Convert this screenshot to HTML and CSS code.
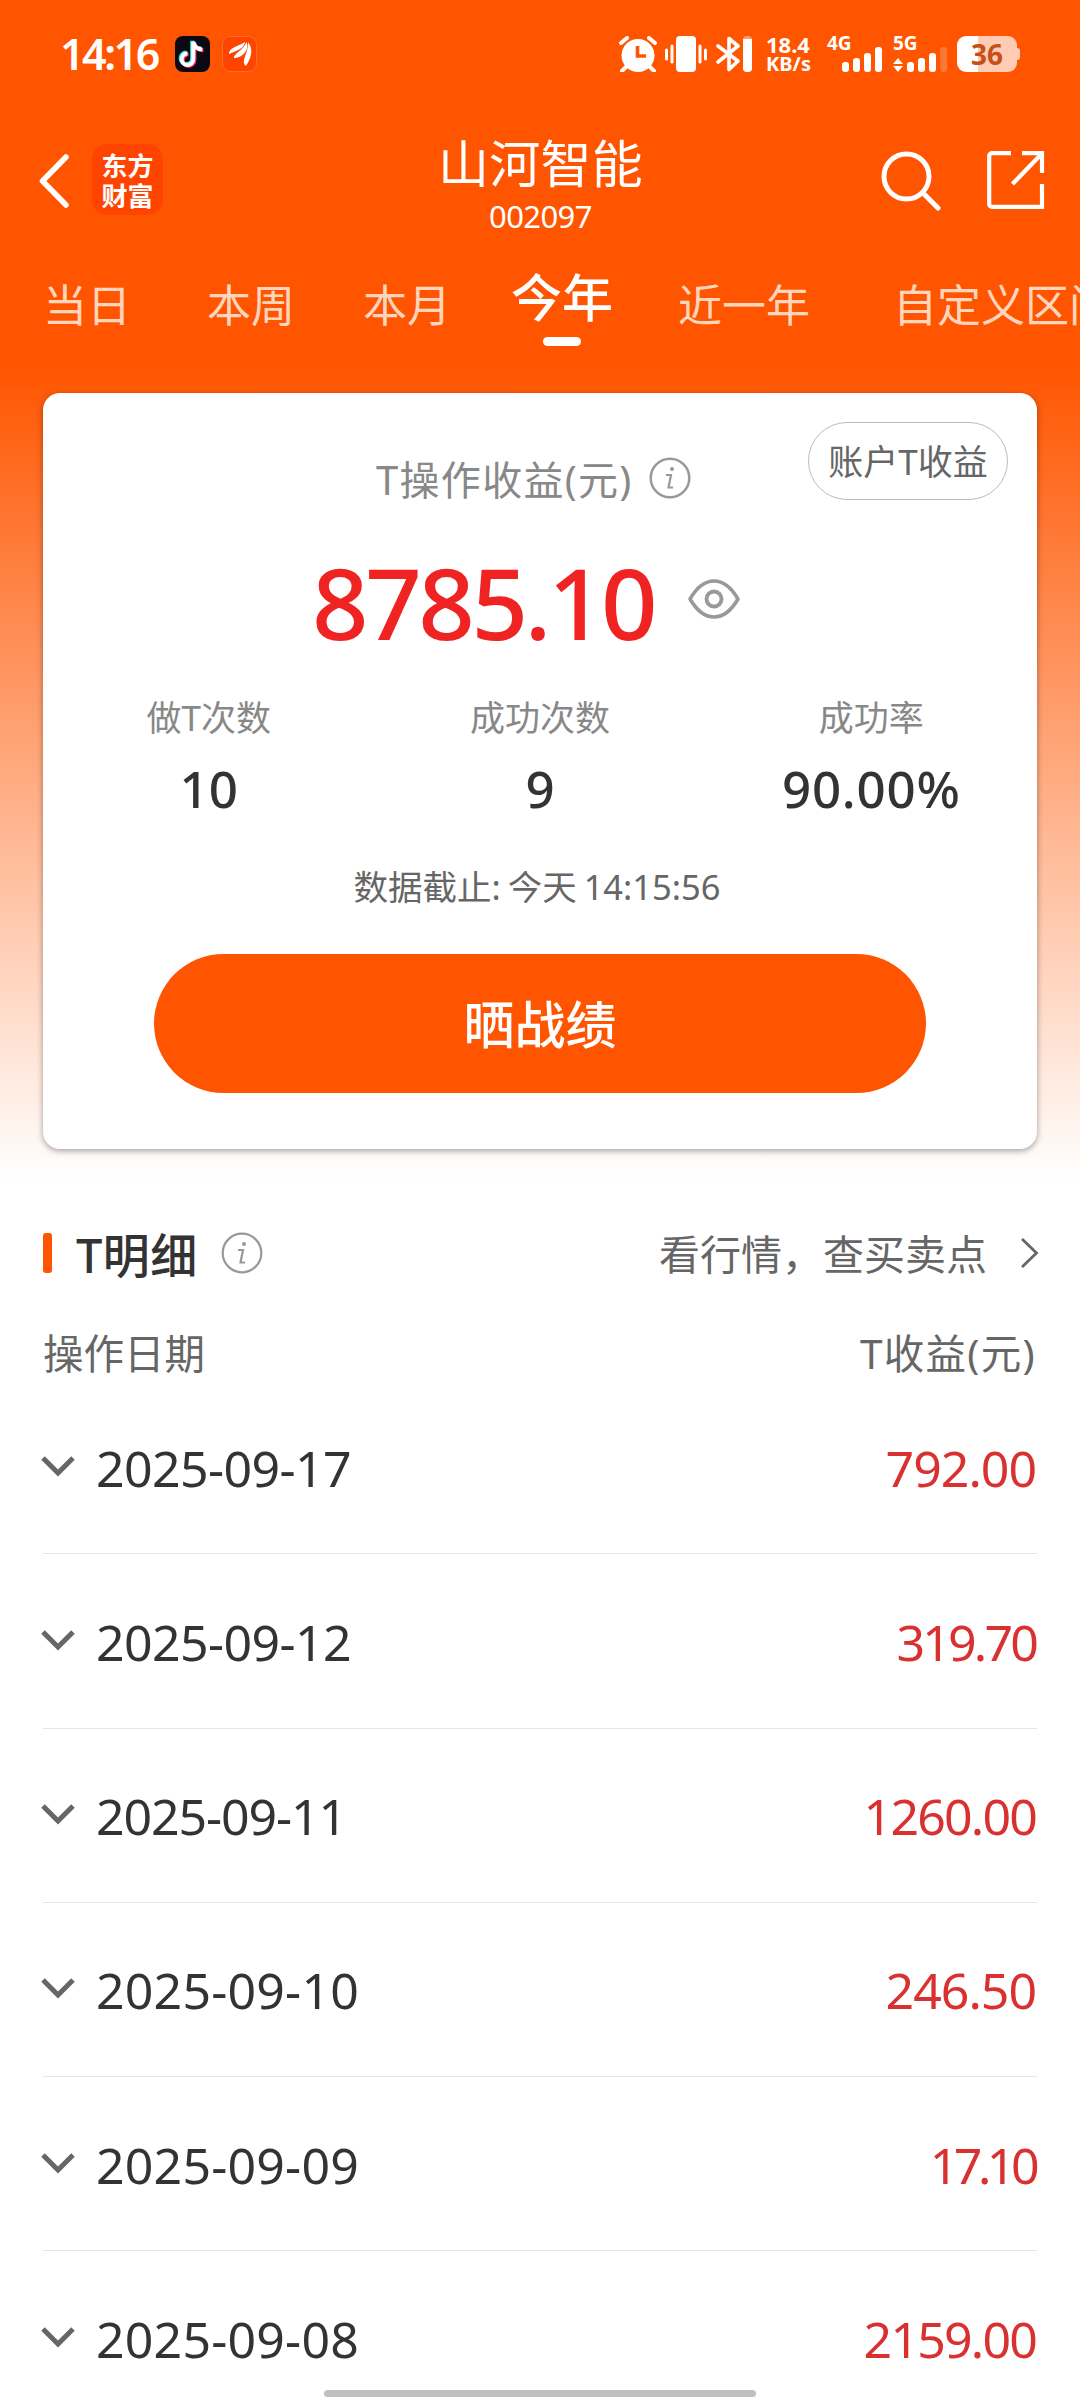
FILE: index.html
```html
<!DOCTYPE html>
<html lang="zh-CN">
<head>
  <meta charset="UTF-8">
  <meta name="viewport" content="width=device-width, initial-scale=1">
  <title>山河智能 002097</title>
  <link rel="stylesheet" href="styles.css">
</head>
<body>
<div class="page">

  <!-- 状态栏 -->
  <div class="status">
    <span class="time">14:16</span>
    <svg class="app-tiktok" width="35" height="36" viewBox="0 0 35 36">
      <rect width="35" height="36" rx="8" fill="#0b0a14"/>
      <g fill="none" stroke-width="4">
        <path d="M18 5v17.500a5.800 5.800 0 1 1-5.800-5.800M18 5c.8 5 4.500 7.500 9 7.700" transform="translate(-.8 -.2)" stroke="#2af0ea"/>
        <path d="M18 5v17.500a5.800 5.800 0 1 1-5.800-5.800M18 5c.8 5 4.500 7.500 9 7.700" transform="translate(1.400 1.600)" stroke="#f5305a"/>
        <path d="M18 5v17.500a5.800 5.800 0 1 1-5.800-5.800M18 5c.8 5 4.500 7.500 9 7.700" transform="translate(.3 .7)" stroke="#fff"/>
      </g>
    </svg>
    <svg class="app-em" width="35" height="36" viewBox="0 0 35 36">
      <rect x=".5" y=".5" width="34" height="35" rx="8" fill="#ff4400" stroke="#ff6c2c"/>
      <path d="M7 18C6 12 17 10 23 6 23 12 14 15 7 18z" fill="#fff"/>
      <path d="M12 22C11 18 22 14 24.500 6 28 14 20 22 12 22z" fill="#fff"/>
      <path d="M24 30C18 26 27 16 26 6 32 14 29 22 24 30z" fill="#fff"/>
    </svg>
    <span class="spacer"></span>
    <svg class="alarm" width="38" height="36" viewBox="0 0 38 36">
      <circle cx="19" cy="19.500" r="16.500" fill="#fff"/>
      <path d="M2 7l6-5M36 7l-6-5M7 31l-4 4M31 31l4 4" stroke="#fff" stroke-width="4" stroke-linecap="round"/>
      <path d="M18.500 10v10H27" fill="none" stroke="#ff5500" stroke-width="3.600"/>
    </svg>
    <svg class="vibrate" width="42" height="36" viewBox="0 0 42 36">
      <rect x="11" y="0" width="20" height="36" rx="4" fill="#fff"/>
      <path d="M1.500 14v9M7 10v16M35 10v16M40.500 14v9" stroke="#fff" stroke-width="3" stroke-linecap="round"/>
    </svg>
    <svg class="bluetooth" width="36" height="36" viewBox="0 0 36 36">
      <path d="M2 10l20 15-9 8.500V2.500L22 10 2 26" fill="none" stroke="#fff" stroke-width="3.600" stroke-linecap="round" stroke-linejoin="round"/>
      <rect x="27" y="0" width="9" height="36" rx="4" fill="#ff9966"/>
      <path d="M27 3h9v29a4 4 0 0 1-4 4h-1a4 4 0 0 1-4-4z" fill="#fff"/>
    </svg>
    <div class="speed"><span>18.4</span><span>KB/s</span></div>
    <div class="signal signal-4g">
      <span>4G</span>
      <svg width="41" height="26" viewBox="0 0 41 26" fill="#fff">
        <rect x="0" y="15" width="7" height="10" rx="3"/>
        <rect x="11" y="11" width="7" height="14" rx="3"/>
        <rect x="22" y="6" width="7" height="19" rx="3"/>
        <rect x="33" y="0" width="7" height="25" rx="3"/>
      </svg>
    </div>
    <div class="signal signal-5g">
      <span>5G</span>
      <svg width="55" height="26" viewBox="0 0 55 26" fill="#fff">
        <path d="M5 11l5 6H0zM5 25l5-6H0z"/>
        <rect x="14" y="15" width="7" height="10" rx="3"/>
        <rect x="25" y="11" width="7" height="14" rx="3"/>
        <rect x="36" y="6" width="7" height="19" rx="3"/>
        <rect x="47" y="0" width="7" height="25" rx="3" fill="#ff7733"/>
      </svg>
    </div>
    <div class="battery">36</div>
  </div>

  <!-- 标题栏 -->
  <div class="nav">
    <svg class="back" width="31" height="54" viewBox="0 0 31 54">
      <path d="M27 3L3.500 27 27 51" fill="none" stroke="#fff" stroke-width="5.500" stroke-linecap="round" stroke-linejoin="round"/>
    </svg>
    <div class="logo">东方<br>财富</div>
    <div class="title">
      <h1>山河智能</h1>
      <p>002097</p>
    </div>
    <svg class="search" width="60" height="60" viewBox="0 0 60 60">
      <circle cx="25.500" cy="25.500" r="22.500" fill="none" stroke="#fff" stroke-width="5"/>
      <path d="M41.500 41.500L57 57" stroke="#fff" stroke-width="5" stroke-linecap="round"/>
    </svg>
    <svg class="share" width="58" height="58" viewBox="0 0 58 58">
      <path d="M24 2.200H5a2.800 2.800 0 0 0-2.800 2.800V53a2.800 2.800 0 0 0 2.800 2.800H55V33M35 2.200H55V22M54 3.500L25.500 33" fill="none" stroke="#fff" stroke-width="4.200"/>
    </svg>
  </div>

  <!-- 时间区间 -->
  <div class="tabs">
    <span class="tab">当日</span>
    <span class="tab tab-week">本周</span>
    <span class="tab tab-month">本月</span>
    <span class="tab active">今年</span>
    <span class="tab tab-year">近一年</span>
    <span class="tab tab-custom">自定义区间</span>
  </div>

  <!-- 收益卡片 -->
  <div class="card">
    <div class="account-btn">账户T收益</div>
    <div class="card-title">
      <span>T操作收益(元)</span>
      <svg class="info" width="42" height="42" viewBox="0 0 42 42">
        <circle cx="21" cy="21" r="19.300" fill="none" stroke="#999" stroke-width="2.500"/>
        <circle cx="23" cy="12" r="2" fill="#999"/>
        <path d="M17 18h5l-2.500 12.500h4.500" fill="none" stroke="#999" stroke-width="2.200"/>
      </svg>
    </div>
    <div class="profit">
      <span>8785.10</span>
      <svg class="eye" width="52" height="40" viewBox="0 0 52 40">
        <path d="M2 20C9 8 17 2 26 2s17 6 24 18c-7 12-15 18-24 18S9 32 2 20z" fill="none" stroke="#999" stroke-width="3.600" stroke-linejoin="round"/>
        <circle cx="26" cy="20" r="7.500" fill="none" stroke="#999" stroke-width="3.800"/>
      </svg>
    </div>
    <div class="stats">
      <div class="stat"><p>做T次数</p><b>10</b></div>
      <div class="stat"><p>成功次数</p><b>9</b></div>
      <div class="stat"><p>成功率</p><b class="rate">90.00%</b></div>
    </div>
    <div class="deadline">数据截止: 今天 14:15:56</div>
    <div class="show-btn">晒战绩</div>
  </div>

  <!-- T明细 -->
  <div class="detail-head">
    <i class="mark"></i>
    <h2>T明细</h2>
    <svg class="info" width="42" height="42" viewBox="0 0 42 42">
      <circle cx="21" cy="21" r="19.300" fill="none" stroke="#999" stroke-width="2.200"/>
      <circle cx="23" cy="12" r="2" fill="#999"/>
      <path d="M17 18h5l-2.500 12.500h4.500" fill="none" stroke="#999" stroke-width="2.200"/>
    </svg>
    <span class="spacer"></span>
    <span class="more">看行情，查买卖点</span>
    <svg width="19" height="32" viewBox="0 0 19 32">
      <path d="M2 2l14.500 14L2 30" fill="none" stroke="#666" stroke-width="2.800"/>
    </svg>
  </div>
  <div class="columns">
    <span>操作日期</span>
    <span class="col-profit">T收益(元)</span>
  </div>
  <div class="list">
    <div class="row">
      <svg class="arrow" width="34" height="22" viewBox="0 0 34 22"><path d="M2 2l15 15L32 2"/></svg>
      <span class="date tight">2025-09-17</span><span class="money">792.00</span>
    </div>
    <div class="row">
      <svg class="arrow" width="34" height="22" viewBox="0 0 34 22"><path d="M2 2l15 15L32 2"/></svg>
      <span class="date tight">2025-09-12</span><span class="money tighter">319.70</span>
    </div>
    <div class="row">
      <svg class="arrow" width="34" height="22" viewBox="0 0 34 22"><path d="M2 2l15 15L32 2"/></svg>
      <span class="date tighter">2025-09-11</span><span class="money tight">1260.00</span>
    </div>
    <div class="row">
      <svg class="arrow" width="34" height="22" viewBox="0 0 34 22"><path d="M2 2l15 15L32 2"/></svg>
      <span class="date">2025-09-10</span><span class="money">246.50</span>
    </div>
    <div class="row">
      <svg class="arrow" width="34" height="22" viewBox="0 0 34 22"><path d="M2 2l15 15L32 2"/></svg>
      <span class="date">2025-09-09</span><span class="money tightest">17.10</span>
    </div>
    <div class="row">
      <svg class="arrow" width="34" height="22" viewBox="0 0 34 22"><path d="M2 2l15 15L32 2"/></svg>
      <span class="date">2025-09-08</span><span class="money tight">2159.00</span>
    </div>
  </div>
  <div class="home-bar"></div>
</div>
</body>
</html>
```
FILE: styles.css
```css
* {
  box-sizing: border-box;
  margin: 0;
  padding: 0;
}
body {
  font-family: "Noto Sans", "Noto Sans CJK SC", sans-serif;
  background: #fff;
  color: #333;
}
svg {
  flex: none;
  display: block;
}
.page {
  position: relative;
  width: 1080px;
  height: 2400px;
  overflow: hidden;
  background: linear-gradient(#ff5500 0, #ff5500 365px, #fff 1180px);
}
.spacer {
  flex: 1;
}

/* 状态栏 */
.status {
  display: flex;
  align-items: center;
  height: 108px;
  padding: 0 63px 0 60px;
  color: #fff;
}
.time {
  width: 115px;
  font-size: 43px;
  font-weight: 600;
  letter-spacing: -2.5px;
  line-height: 50px;
}
.app-em {
  margin-left: 12px;
}
.vibrate {
  margin-left: 8px;
}
.bluetooth {
  margin-left: 9px;
}
.speed {
  display: flex;
  flex-direction: column;
  width: 50px;
  margin-left: 14px;
  font-size: 22px;
  font-weight: 700;
  line-height: 20px;
}
.speed span:last-child {
  font-size: 20px;
}
.signal {
  display: flex;
  flex-direction: column;
  height: 36px;
  font-size: 19px;
  font-weight: 700;
  line-height: 15px;
}
.signal span {
  height: 11px;
}
.signal-4g {
  width: 56px;
  margin-left: 11px;
}
.signal-4g svg {
  align-self: flex-end;
}
.signal-5g {
  width: 55px;
  margin-left: 10px;
}
.battery {
  position: relative;
  width: 60px;
  height: 36px;
  margin-left: 9px;
  border-radius: 9px;
  background: linear-gradient(90deg, #fff 21px, #ffccb3 21px);
  color: #c4501a;
  font-size: 28px;
  font-weight: 700;
  line-height: 36px;
  text-align: center;
}
.battery::after {
  content: "";
  position: absolute;
  right: -3px;
  top: 12px;
  width: 3px;
  height: 12px;
  border-radius: 0 3px 3px 0;
  background: #ffccb3;
}

/* 标题栏 */
.nav {
  position: relative;
  display: flex;
  height: 144px;
  padding: 36px 35px 0 39px;
  color: #fff;
}
.back {
  margin-top: 10px;
}
.logo {
  width: 71px;
  height: 71px;
  margin-left: 22px;
  padding-top: 6px;
  border-radius: 15px;
  background: #ff4400;
  font-family: "Noto Sans CJK SC", sans-serif;
  font-size: 26px;
  font-weight: 700;
  line-height: 30px;
  text-align: center;
}
.title {
  flex: 1;
  padding-left: 37px;
  text-align: center;
}
.title h1 {
  height: 62px;
  margin-top: -14px;
  font-size: 51px;
  font-weight: 400;
  line-height: 66px;
  letter-spacing: 0.3px;
}
.title p {
  font-size: 31px;
  line-height: 34px;
  margin-top: 7px;
  letter-spacing: -0.6px;
}
.search {
  margin-top: 7px;
}
.share {
  margin: 7px 0 0 46px;
}

/* 时间区间 */
.tabs {
  display: flex;
  height: 141px;
  padding: 23px 0 0 43px;
  overflow: hidden;
  white-space: nowrap;
}
.tab {
  flex: none;
  font-size: 44px;
  line-height: 60px;
  color: #ffd5bd;
}
.tab-week {
  margin-left: 76px;
}
.tab-month {
  margin-left: 68px;
}
.tab.active {
  position: relative;
  margin: -8px 0 0 60px;
  font-size: 51px;
  font-weight: 500;
  color: #fff;
}
.tab.active::after {
  content: "";
  position: absolute;
  left: 32px;
  top: 70px;
  width: 38px;
  height: 9px;
  border-radius: 5px;
  background: #fff;
}
.tab-year {
  margin-left: 65px;
}
.tab-custom {
  margin-left: 83px;
}

/* 收益卡片 */
.card {
  position: relative;
  width: 994px;
  height: 756px;
  margin: 0 auto;
  padding-top: 59px;
  border-radius: 17px;
  background: #fff;
  box-shadow: 0 2px 6px rgba(0, 0, 0, 0.35);
}
.account-btn {
  position: absolute;
  top: 29px;
  right: 29px;
  width: 200px;
  height: 78px;
  border: 1px solid #bbb;
  border-radius: 39px;
  color: #666;
  font-size: 35px;
  line-height: 78px;
  text-align: center;
}
.card-title {
  display: flex;
  align-items: center;
  height: 56px;
  padding-left: 333px;
  color: #888;
  font-size: 40px;
  letter-spacing: 1.3px;
}
.card-title span {
  margin-top: -5px;
}
.card-title .info {
  margin: -5px 0 0 16px;
}
.profit {
  display: flex;
  align-items: center;
  height: 140px;
  margin-top: 24px;
  padding-left: 269px;
  color: #f02323;
  font-size: 99px;
  font-weight: 500;
  line-height: 140px;
  letter-spacing: -3.5px;
}
.eye {
  margin: -7px 0 0 34px;
}
.stats {
  display: flex;
  margin-top: 20px;
}
.stat {
  flex: 1;
  text-align: center;
}
.stat p {
  color: #888;
  font-size: 35px;
  line-height: 51px;
}
.stat b {
  display: block;
  margin-top: 12px;
  font-size: 51px;
  font-weight: 500;
  line-height: 66px;
}
.stat .rate {
  letter-spacing: 0.8px;
}
.deadline {
  margin-top: 41px;
  padding-right: 6px;
  color: #666;
  font-size: 34.5px;
  line-height: 50px;
  word-spacing: -2px;
  text-align: center;
}
.show-btn {
  width: 772px;
  height: 139px;
  margin: 42px auto 0;
  border-radius: 70px;
  background: #ff5500;
  color: #fff;
  font-size: 51px;
  font-weight: 500;
  line-height: 140px;
  text-align: center;
}

/* T明细 */
.detail-head {
  display: flex;
  align-items: center;
  height: 80px;
  margin-top: 64px;
  padding: 0 41px 0 43px;
}
.mark {
  width: 9px;
  height: 40px;
  border-radius: 3px;
  background: #ff5500;
}
.detail-head h2 {
  margin: 3px 23px 0 24px;
  font-size: 47px;
  font-weight: 500;
  line-height: 60px;
  letter-spacing: 0.4px;
}
.more {
  margin: 2px 33px 0 0;
  color: #666;
  font-size: 41px;
  line-height: 60px;
}
.columns {
  display: flex;
  justify-content: space-between;
  height: 87px;
  padding: 31px 44px 0 43px;
  color: #666;
  font-size: 40.5px;
  line-height: 60px;
}
.col-profit {
  letter-spacing: 1.3px;
}
.list {
  margin: 0 43px;
}
.row {
  display: flex;
  align-items: center;
  height: 174.250px;
  border-bottom: 1px solid #e6e6e6;
}
.arrow {
  margin: 0 0 0 -2px;
  fill: none;
  stroke: #666;
  stroke-width: 5;
}
.date,
.money {
  font-size: 50px;
  line-height: 68px;
  margin-top: 2px;
}
.date {
  flex: 1;
  margin-left: 21px;
  letter-spacing: 0.2px;
}
.date.tight {
  letter-spacing: -0.6px;
}
.date.tighter {
  letter-spacing: -1.1px;
}
.money {
  padding-right: 1px;
  color: #d93030;
  letter-spacing: -1px;
}
.money.tight {
  letter-spacing: -1.8px;
}
.money.tighter {
  letter-spacing: -2.8px;
}
.money.tightest {
  padding-right: 2px;
  letter-spacing: -4.5px;
}
.home-bar {
  position: absolute;
  left: 324px;
  bottom: 3px;
  width: 432px;
  height: 7px;
  border-radius: 4px;
  background: #c0c0c0;
}
```
